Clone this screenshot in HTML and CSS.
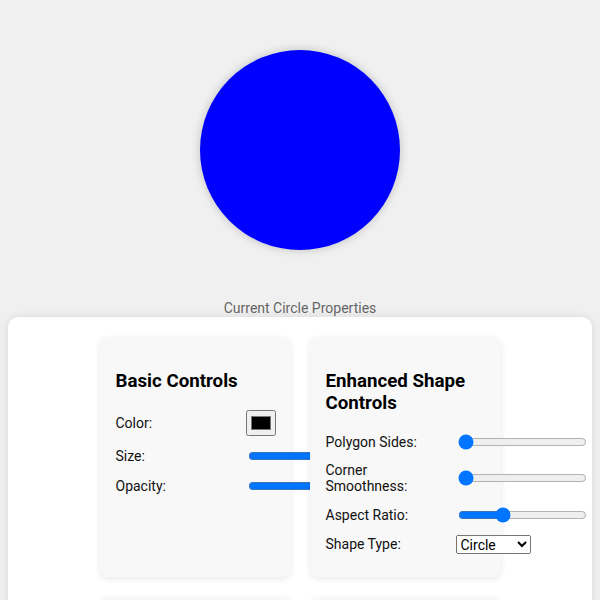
FILE: index.html
```html
<!DOCTYPE html>
<html>
<head>
<meta charset="utf-8">
<link rel="stylesheet" href="styles.css">
</head>
<body>
<div class="stage">
  <div class="circle"></div>
  <div class="caption">Current Circle Properties</div>
</div>
<div class="panel">
  <div class="grid">
    <div class="card">
      <h3>Basic Controls</h3>
      <div class="row"><label>Color:</label><input type="color" class="swatch" value="#000000"></div>
      <div class="row"><label>Size:</label><input type="range" min="50" max="300" value="300"></div>
      <div class="row"><label>Opacity:</label><input type="range" min="0" max="1" step="0.1" value="1"></div>
    </div>
    <div class="card">
      <h3>Enhanced Shape Controls</h3>
      <div class="row"><label>Polygon Sides:</label><input type="range" min="0" max="12" value="0"></div>
      <div class="row"><label>Corner Smoothness:</label><input type="range" min="0" max="100" value="0"></div>
      <div class="row"><label>Aspect Ratio:</label><input type="range" min="0.5" max="2" step="0.1" value="1"></div>
      <div class="row"><label>Shape Type:</label><select class="picker"><option>Circle</option><option>Square</option><option>Polygon</option></select></div>
    </div>
    <div class="card card-next"></div>
    <div class="card card-next"></div>
  </div>
</div>
</body>
</html>
```
FILE: styles.css
```css
html, body {
  margin: 0;
  background: #f0f0f0;
  font-family: Roboto, "Liberation Sans", sans-serif;
  font-size: 14px;
  color: #111;
}
.stage {
  padding-top: 50px;
  display: flex;
  flex-direction: column;
  align-items: center;
}
.circle {
  width: 200px;
  height: 200px;
  border-radius: 50%;
  background: #0000ff;
  box-shadow: 0 0 10px rgba(0, 0, 0, 0.2);
}
.caption {
  margin-top: 50px;
  color: #666;
  font-size: 14px;
  line-height: 16px;
}
.panel {
  margin: 1px 8px 0;
  background: #fff;
  border-radius: 10px;
  padding: 20px;
  box-shadow: 0 0 8px rgba(0, 0, 0, 0.1);
}
.grid {
  display: grid;
  grid-template-columns: repeat(2, 191px);
  column-gap: 19px;
  row-gap: 20px;
  justify-content: center;
}
.card {
  isolation: isolate;
  background: #f8f8f8;
  border-radius: 8px;
  padding: 15px 16px 13px;
  box-shadow: 0 2px 6px rgba(0, 0, 0, 0.09);
}
.card-next {
  min-height: 150px;
}
.card h3 {
  margin: 18px 0;
  font-size: 18.72px;
  line-height: 22px;
  font-weight: 700;
  color: #000;
}
.row {
  display: flex;
  align-items: center;
  gap: 10px;
  margin-bottom: 10px;
}
.row label {
  width: 120px;
  flex-shrink: 0;
  line-height: 16.4px;
}
.row input, .row select {
  flex-shrink: 0;
}
.swatch {
  width: 30px;
  height: 26px;
  margin: 0;
}
.picker {
  width: 75px;
  height: 19px;
  font-family: Roboto, "Liberation Sans", sans-serif;
  font-size: 14px;
  margin: 0;
}
```
